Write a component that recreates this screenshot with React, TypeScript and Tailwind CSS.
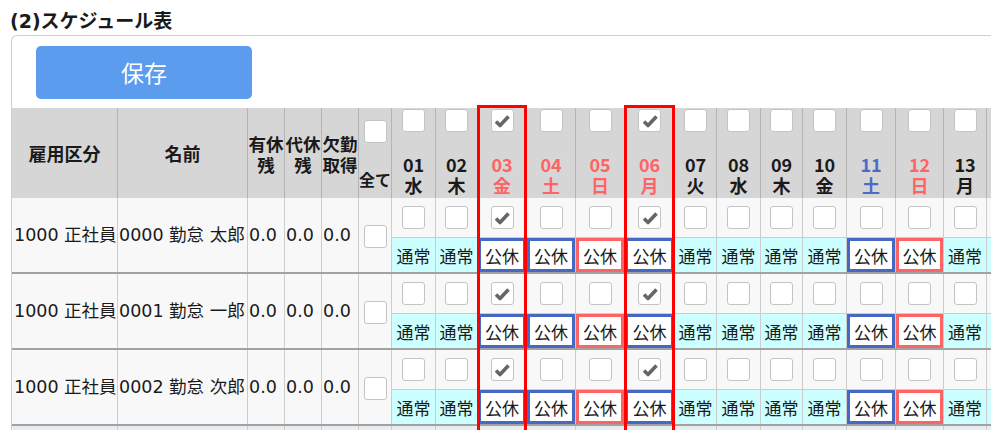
import React from "react";

type Tone = "n" | "r" | "b";
type Status = "normal" | "blue" | "red";

type DateCol = {
  d: string;
  w: string;
  width: number;
  tone: Tone;
  checked: boolean;
  status: Status;
};

const dates: DateCol[] = [
  { d: "01", w: "水", width: 44, tone: "n", checked: false, status: "normal" },
  { d: "02", w: "木", width: 42, tone: "n", checked: false, status: "normal" },
  { d: "03", w: "金", width: 49, tone: "r", checked: true, status: "blue" },
  { d: "04", w: "土", width: 49, tone: "r", checked: false, status: "blue" },
  { d: "05", w: "日", width: 49, tone: "r", checked: false, status: "red" },
  { d: "06", w: "月", width: 50, tone: "r", checked: true, status: "blue" },
  { d: "07", w: "火", width: 42, tone: "n", checked: false, status: "normal" },
  { d: "08", w: "水", width: 44, tone: "n", checked: false, status: "normal" },
  { d: "09", w: "木", width: 42, tone: "n", checked: false, status: "normal" },
  { d: "10", w: "金", width: 44, tone: "n", checked: false, status: "normal" },
  { d: "11", w: "土", width: 49, tone: "b", checked: false, status: "blue" },
  { d: "12", w: "日", width: 48, tone: "r", checked: false, status: "red" },
  { d: "13", w: "月", width: 43, tone: "n", checked: false, status: "normal" },
  { d: "14", w: "火", width: 43, tone: "n", checked: false, status: "normal" },
];

const employees = [
  { kbn: "1000 正社員", name: "0000 勤怠 太郎" },
  { kbn: "1000 正社員", name: "0001 勤怠 一郎" },
  { kbn: "1000 正社員", name: "0002 勤怠 次郎" },
  { kbn: "1000 正社員", name: "0003 勤怠 三郎" },
];

// left fixed columns: 雇用区分, 名前, 有休残, 代休残, 欠勤取得, 全て
const LEFT_W = [106, 130, 37, 37, 37, 33];
const LEFT_TOTAL = LEFT_W.reduce((a, b) => a + b, 0);

const WIDE = { fontFamily: '"DejaVu Sans", "Noto Sans CJK JP", sans-serif' };

const toneClass: Record<Tone, string> = {
  n: "text-[#1a1a1a]",
  r: "text-[#ff6464]",
  b: "text-[#4a6cc6]",
};

const Check = ({ checked }: { checked?: boolean }) => (
  <div className="w-[23px] h-[23px] bg-white border border-[#c4c4c4] rounded-[3px] flex items-center justify-center">
    {checked && (
      <svg width="16" height="14" viewBox="0 0 16 14">
        <polyline
          points="2,7.5 6,11.5 14.5,2.5"
          fill="none"
          stroke="#666666"
          strokeWidth="3.6"
          strokeLinejoin="round"
        />
      </svg>
    )}
  </div>
);

const StatusCell = ({ status }: { status: Status }) => {
  if (status === "normal") {
    return (
      <div className="h-full bg-[#ccffff] flex items-center justify-center text-[17px] leading-none">
        通常
      </div>
    );
  }
  const border = status === "blue" ? "border-[#4568c4]" : "border-[#ff6464]";
  return (
    <div className={`h-full bg-white border-[3px] ${border} flex items-center justify-center text-[17px] leading-none`}>
      公休
    </div>
  );
};

const App = () => {
  // x offsets for red highlight boxes around checked day columns
  let x = LEFT_TOTAL;
  const highlights: { left: number; width: number }[] = [];
  dates.forEach((c) => {
    if (c.checked) highlights.push({ left: x - 1, width: c.width + 1 });
    x += c.width;
  });

  return (
    <div
      className="w-[991px] h-[430px] overflow-hidden bg-white text-[#1a1a1a]"
      style={{ fontFamily: '"Noto Sans CJK JP", "Noto Sans", sans-serif' }}
    >
      {/* Title */}
      <div className="pt-[9px] pl-[10px] h-[35px] text-[19px] leading-[24px] font-bold" style={WIDE}>
        (2)スケジュール表
      </div>

      {/* Panel */}
      <div className="ml-[11px] w-[1100px] border-l border-t border-[#cfcfcf] rounded-tl-[6px] pt-[10px]">
        <button className="ml-[24px] w-[216px] h-[53px] rounded-[5px] bg-[#5b9cee] text-white text-[23px] leading-none">
          保存
        </button>

        {/* Schedule table */}
        <div className="relative mt-[9px] w-max">
          {/* Header */}
          <div className="flex h-[90px] bg-[#d6d6d6] font-bold text-[18px]">
            <div className="w-[106px] shrink-0 border-r border-[#b4b4b4] flex items-center justify-center">
              雇用区分
            </div>
            <div className="w-[130px] shrink-0 border-r border-[#b4b4b4] flex items-center justify-center">
              名前
            </div>
            {[
              ["有休", "残"],
              ["代休", "残"],
              ["欠勤", "取得"],
            ].map((t, i) => (
              <div
                key={i}
                className="w-[37px] shrink-0 border-r border-[#b4b4b4] flex flex-col items-center justify-center text-[17.5px] leading-[21px] whitespace-nowrap pt-[1px]"
              >
                <span>{t[0]}</span>
                <span>{t[1]}</span>
              </div>
            ))}
            <div className="w-[33px] shrink-0 border-r border-[#b4b4b4] flex flex-col items-center pt-[12px]">
              <Check />
              <span className="mt-[25px] text-[16px] leading-[22px] whitespace-nowrap">全て</span>
            </div>
            {dates.map((c) => (
              <div
                key={c.d}
                style={{ width: c.width }}
                className={`shrink-0 border-r border-[#b4b4b4] flex flex-col items-center pt-[1px] ${toneClass[c.tone]}`}
              >
                <Check checked={c.checked} />
                <div className="mt-auto flex flex-col items-center leading-[21px] pb-[2px]">
                  <span>{c.d}</span>
                  <span>{c.w}</span>
                </div>
              </div>
            ))}
          </div>

          {/* Body rows */}
          {employees.map((e, ri) => (
            <div
              key={ri}
              className={`flex h-[76px] border-b-2 border-[#a2a2a2] text-[17.5px] ${ri === 3 ? "bg-[#e8edf2]" : "bg-[#f8f8f8]"}`}
            >
              <div
                className="w-[106px] shrink-0 border-r border-[#cccccc] flex items-center pl-[2px] whitespace-nowrap overflow-hidden"
                style={WIDE}
              >
                {e.kbn}
              </div>
              <div
                className="w-[130px] shrink-0 border-r border-[#cccccc] flex items-center pl-[1px] whitespace-nowrap overflow-hidden"
                style={WIDE}
              >
                {e.name}
              </div>
              {[0, 1, 2].map((k) => (
                <div
                  key={k}
                  className="w-[37px] shrink-0 border-r border-[#cccccc] flex items-center pl-[1px] whitespace-nowrap"
                  style={WIDE}
                >
                  0.0
                </div>
              ))}
              <div className="w-[33px] shrink-0 border-r border-[#cccccc] flex items-center justify-center pt-[3px]">
                <Check />
              </div>
              {dates.map((c) => (
                <div key={c.d} style={{ width: c.width }} className="shrink-0 border-r border-[#cccccc] flex flex-col">
                  <div className="h-[39px] flex items-center justify-center">
                    <Check checked={c.checked} />
                  </div>
                  <div className="h-[35px] border-t border-[#cccccc]">
                    <StatusCell status={c.status} />
                  </div>
                </div>
              ))}
            </div>
          ))}

          {/* Red highlight around checked day columns */}
          {highlights.map((h, i) => (
            <div
              key={i}
              className="absolute top-[-3px] h-[330px] border-[3px] border-[#ff0000] pointer-events-none"
              style={{ left: h.left, width: h.width }}
            />
          ))}
        </div>
      </div>
    </div>
  );
};

export default App;
